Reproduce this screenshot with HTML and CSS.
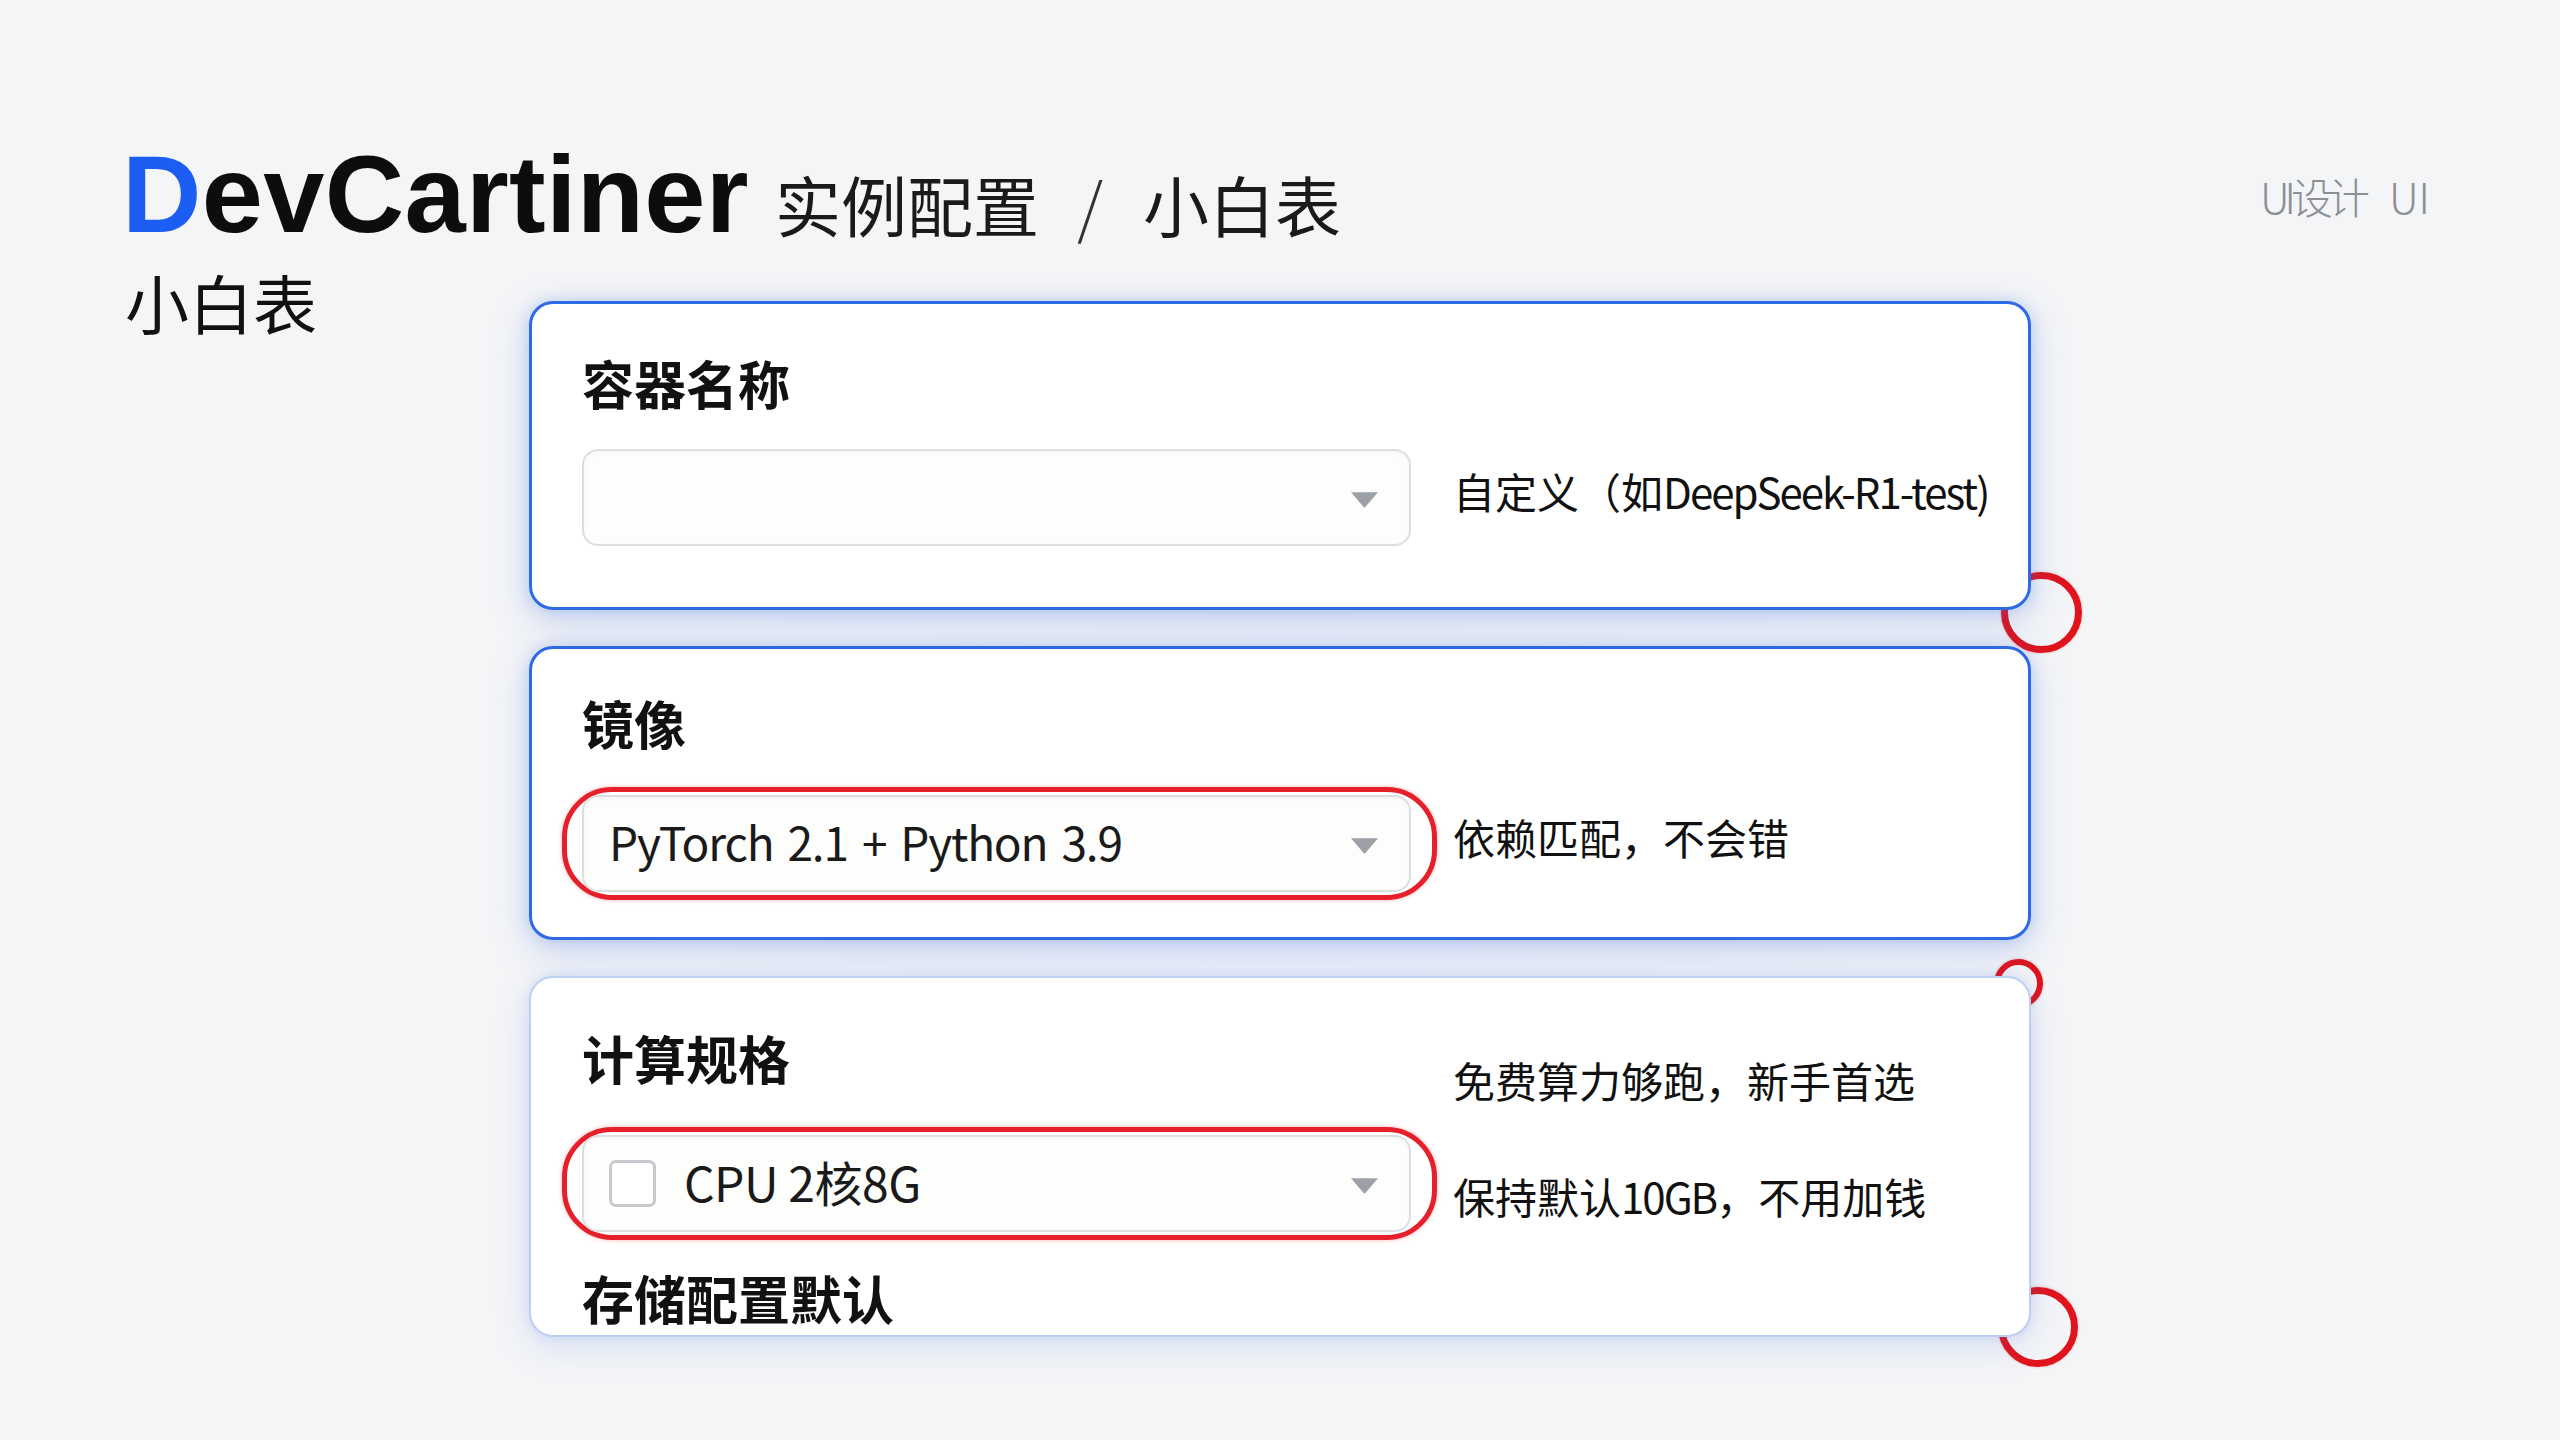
FILE: index.html
```html
<!DOCTYPE html>
<html lang="zh-CN">
<head>
<meta charset="utf-8">
<title>DevCartiner 实例配置 / 小白表</title>
<link rel="stylesheet" href="styles.css">
</head>
<body>
<div class="page">
  <header class="top">
    <h1 class="title">
      <span class="brand"><span class="brand-d">D</span>evCartiner</span>
      <span class="crumb">实例配置</span>
      <span class="sep">/</span>
      <span class="crumb crumb-last">小白表</span>
    </h1>
    <div class="tag"><span class="tag-a">UI设计</span><span class="tag-b">UI</span></div>
  </header>

  <main class="main">
    <div class="subtitle">小白表</div>

    <div class="cards">
      <section class="card card-name">
        <h2 class="label">容器名称</h2>
        <div class="row row-name">
          <div class="select">
            <span class="select-value"></span>
            <svg class="arrow" viewBox="0 0 29 17"><path d="M1 1.2 H28 L15.4 15.9 Q14.5 16.9 13.6 15.9 Z" fill="#9ca1a7"/></svg>
          </div>
          <p class="hint hint-up">自定义（如<span class="latin">DeepSeek-R1-test)</span></p>
        </div>
        <span class="dot dot-a"></span>
      </section>

      <section class="card card-image">
        <h2 class="label">镜像</h2>
        <div class="row row-image">
          <div class="ring">
            <div class="select">
              <span class="select-value value-tight">PyTorch 2.1 + Python 3.9</span>
              <svg class="arrow" viewBox="0 0 29 17"><path d="M1 1.2 H28 L15.4 15.9 Q14.5 16.9 13.6 15.9 Z" fill="#9ca1a7"/></svg>
            </div>
          </div>
          <p class="hint hint-up">依赖匹配，不会错</p>
        </div>
      </section>

      <section class="card card-spec">
        <div class="spec-head">
          <h2 class="label">计算规格</h2>
          <p class="hint hint-free">免费算力够跑，新手首选</p>
        </div>
        <div class="row row-spec">
          <div class="ring">
            <div class="select">
              <span class="check"></span>
              <span class="select-value">CPU 2核8G</span>
              <svg class="arrow" viewBox="0 0 29 17"><path d="M1 1.2 H28 L15.4 15.9 Q14.5 16.9 13.6 15.9 Z" fill="#9ca1a7"/></svg>
            </div>
          </div>
          <p class="hint hint-storage">保持默认<span class="latin">10GB</span>，不用加钱</p>
        </div>
        <h2 class="label label-storage">存储配置默认</h2>
        <span class="dot dot-b"></span>
        <span class="dot dot-c"></span>
      </section>
    </div>
  </main>
</div>
</body>
</html>
```

FILE: styles.css
```css
html, body {
  margin: 0;
  padding: 0;
}

body {
  width: 2560px;
  height: 1440px;
  overflow: hidden;
  background: #f4f5f7;
  background-image: radial-gradient(ellipse 1100px 700px at 1280px 820px, #eef2f9 0%, #f4f5f7 70%);
  font-family: "Noto Sans CJK SC", "Noto Sans", sans-serif;
  color: #111;
}

.page {
  box-sizing: border-box;
  width: 2560px;
  height: 1440px;
  padding: 139px 130px 0 122px;
}

/* ---------- header ---------- */
.top {
  display: flex;
  justify-content: space-between;
  align-items: flex-start;
}

.title {
  margin: 0;
  display: flex;
  align-items: baseline;
  height: 108px;
  font-weight: 400;
}

.brand {
  font-family: "Liberation Sans", Arial, sans-serif;
  font-weight: 700;
  font-size: 110px;
  line-height: 1;
  letter-spacing: 0.3px;
  color: #0d0d0d;
}

.brand-d {
  color: #1c5df3;
}

.crumb {
  font-size: 66px;
  line-height: 1;
  color: #1a1a1a;
  margin-left: 26px;
}

.crumb-last {
  margin-left: 0;
}

.sep {
  font-size: 66px;
  line-height: 1;
  font-weight: 300;
  color: #333;
  margin: 0 40px 0 38px;
}

.tag {
  display: flex;
  margin-top: 36px;
  font-size: 42px;
  line-height: 1;
  font-weight: 300;
  color: #8c8f93;
}

.tag-a {
  letter-spacing: -5px;
}

.tag-b {
  margin-left: 24px;
}

/* ---------- main ---------- */
.main {
  display: flex;
  margin-top: 22px;
}

.subtitle {
  box-sizing: border-box;
  flex: none;
  width: 407px;
  padding-left: 3px;
  font-size: 64px;
  line-height: 1;
  color: #111;
}

.cards {
  flex: none;
  width: 1502px;
  margin-top: 32px;
  display: flex;
  flex-direction: column;
  gap: 36px;
}

.card {
  position: relative;
  box-sizing: border-box;
  background: #fff;
  border: 3px solid #2d6be4;
  border-radius: 24px;
  box-shadow: 0 10px 36px rgba(60, 110, 225, 0.26), 0 0 14px rgba(60, 110, 225, 0.22);
}

.card-name {
  padding: 53px 0 61px 50px;
}

.card-image {
  padding: 48px 0 37px 50px;
}

.card-spec {
  border: 2px solid #bdd0f3;
  padding: 54px 0 11px 51px;
  box-shadow: 0 10px 36px rgba(60, 110, 225, 0.16), 0 0 12px rgba(60, 110, 225, 0.14);
}

.label {
  margin: 0;
  font-size: 52px;
  line-height: 1;
  font-weight: 700;
  color: #111;
}

.row {
  display: grid;
  grid-template-columns: 871px auto;
  align-items: center;
}

.row-name {
  margin-top: 40px;
}

.row-image {
  margin-top: 38px;
}

.row-spec {
  margin-top: 26px;
}

.select {
  box-sizing: border-box;
  width: 829px;
  height: 97px;
  display: flex;
  align-items: center;
  padding: 0 30px 0 25px;
  border: 2px solid #dcdee1;
  border-radius: 16px;
  background: #fdfdfc;
  box-shadow: inset 0 2px 4px rgba(0, 0, 0, 0.035);
}

.select-value {
  flex: 1;
  font-size: 48px;
  line-height: 1;
  color: #1a1a1a;
  margin-bottom: 6px;
  letter-spacing: -0.5px;
}

.value-tight {
  font-size: 46px;
  letter-spacing: -1.2px;
  word-spacing: 5px;
}

.arrow {
  flex: none;
  width: 29px;
  height: 17px;
  margin-top: 4px;
}

.check {
  flex: none;
  box-sizing: border-box;
  width: 47px;
  height: 47px;
  margin-right: 28px;
  border: 3px solid #c6c9cd;
  border-radius: 7px;
  background: #fff;
}

.ring {
  box-sizing: border-box;
  width: 875px;
  margin-left: -20px;
  padding: 3px 0 3px 15px;
  border: 5px solid #e5202b;
  border-radius: 50px;
  background: #fff;
  box-shadow: 0 0 4px rgba(229, 32, 43, 0.35);
}

.hint {
  margin: 0;
  font-size: 42px;
  line-height: 1;
  color: #111;
  white-space: nowrap;
}

.latin {
  letter-spacing: -2px;
}

.hint-up {
  margin-bottom: 14px;
}

.spec-head {
  display: grid;
  grid-template-columns: 871px auto;
  align-items: start;
}

.hint-free {
  margin-top: 27px;
}

.hint-storage {
  margin-top: 25px;
}

.label-storage {
  margin-top: 32px;
}

/* decorative red rings tucked behind card corners */
.dot {
  position: absolute;
  z-index: -1;
  box-sizing: border-box;
  border: 7px solid #e0141c;
  border-radius: 50%;
  box-shadow: 0 0 3px rgba(224, 20, 28, 0.3);
}

.dot-a {
  width: 81px;
  height: 81px;
  right: -54px;
  bottom: -46px;
}

.dot-b {
  width: 49px;
  height: 49px;
  border-width: 6px;
  top: -19px;
  right: -14px;
}

.dot-c {
  width: 80px;
  height: 80px;
  right: -49px;
  bottom: -32px;
}
```
